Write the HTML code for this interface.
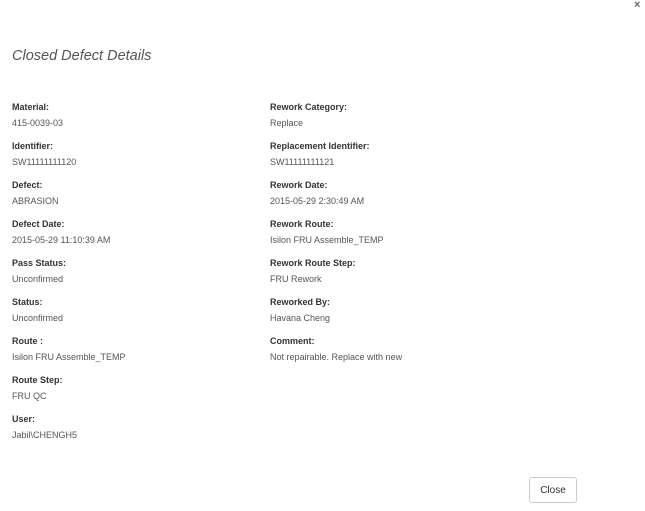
<!DOCTYPE html>
<html><head><meta charset="utf-8"><style>
body{margin:0;width:645px;height:511px;background:#fff;font-family:"Liberation Sans",sans-serif;position:relative;overflow:hidden}
.x{position:absolute;left:634px;top:-1px;font-size:11px;font-weight:bold;color:#666}
.t{position:absolute;left:12px;top:48px;font-size:14.5px;font-style:italic;color:#555}
.f{position:absolute;font-size:9px;line-height:12px}
.f b{display:block;color:#333;font-weight:bold}
.f span{display:block;color:#555;margin-top:4px}
.btn{position:absolute;left:529px;top:477px;width:46px;height:24px;border:1px solid #ccc;border-radius:3px;font-size:10px;color:#333;text-align:center;line-height:25px}
</style></head><body>
<div class="x">×</div>
<div class="t">Closed Defect Details</div>
<div class="f" style="left:12px;top:101px"><b>Material:</b><span>415-0039-03</span></div>
<div class="f" style="left:12px;top:140px"><b>Identifier:</b><span>SW11111111120</span></div>
<div class="f" style="left:12px;top:179px"><b>Defect:</b><span>ABRASION</span></div>
<div class="f" style="left:12px;top:218px"><b>Defect Date:</b><span>2015-05-29 11:10:39 AM</span></div>
<div class="f" style="left:12px;top:257px"><b>Pass Status:</b><span>Unconfirmed</span></div>
<div class="f" style="left:12px;top:296px"><b>Status:</b><span>Unconfirmed</span></div>
<div class="f" style="left:12px;top:335px"><b>Route :</b><span>Isilon FRU Assemble_TEMP</span></div>
<div class="f" style="left:12px;top:374px"><b>Route Step:</b><span>FRU QC</span></div>
<div class="f" style="left:12px;top:413px"><b>User:</b><span>Jabil\CHENGH5</span></div>
<div class="f" style="left:270px;top:101px"><b>Rework Category:</b><span>Replace</span></div>
<div class="f" style="left:270px;top:140px"><b>Replacement Identifier:</b><span>SW11111111121</span></div>
<div class="f" style="left:270px;top:179px"><b>Rework Date:</b><span>2015-05-29 2:30:49 AM</span></div>
<div class="f" style="left:270px;top:218px"><b>Rework Route:</b><span>Isilon FRU Assemble_TEMP</span></div>
<div class="f" style="left:270px;top:257px"><b>Rework Route Step:</b><span>FRU Rework</span></div>
<div class="f" style="left:270px;top:296px"><b>Reworked By:</b><span>Havana Cheng</span></div>
<div class="f" style="left:270px;top:335px"><b>Comment:</b><span>Not repairable. Replace with new</span></div>
<div class="btn">Close</div>
</body></html>
